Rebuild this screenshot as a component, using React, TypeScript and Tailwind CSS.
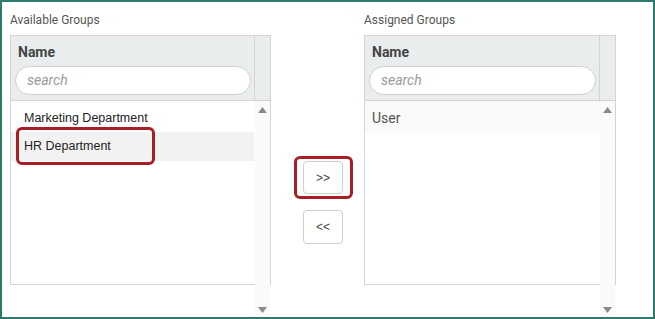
import React from 'react';

const Arrow = ({ up }: { up?: boolean }) => (
  <svg width="9" height="6" viewBox="0 0 9 6" className="block">
    {up ? <polygon points="4.5,0 9,6 0,6" fill="#8a8a8a" /> : <polygon points="0,0 9,0 4.5,6" fill="#8a8a8a" />}
  </svg>
);

// One list box: title, header with search, body with fake scrollbar
function GroupList({ title, children, wide }: { title: string; children?: React.ReactNode; wide?: boolean }) {
  return (
    <div className={wide ? 'w-[252px]' : 'w-[261px]'}>
      <div className="h-4 text-[12px] leading-4 text-[#555] mb-[7px] font-['Roboto',sans-serif]">{title}</div>
      <div className="relative border border-[#d4d4d4] bg-white">
        <div className="flex h-[64px] bg-[#eaeded] border-b border-[#d4d4d4] box-content">
          <div className="flex-1 pl-[4px] pr-[3px]">
            <div className="pt-[8px] pl-[3px] h-[30px] text-[14px] leading-[16px] font-bold text-[#444] font-['Roboto',sans-serif]">Name</div>
            <div className="h-[29px] rounded-full border border-[#d0d0d0] bg-white pl-[11px] flex items-center text-[14px] italic text-[#9a9a9a] font-['Roboto',sans-serif]">
              search
            </div>
          </div>
          <div className="w-[16px] border-l border-[#d4d4d4]" />
        </div>
        <div className="relative h-[183px]">
          {children}
          <div className="absolute right-0 top-0 w-[15px] h-[216px] bg-[#fafafa] flex flex-col items-center justify-between pt-[6px] pb-[4px]">
            <Arrow up />
            <Arrow />
          </div>
        </div>
      </div>
    </div>
  );
}

export default function App() {
  return (
    <div className="w-[655px] h-[319px] border-2 border-[#2e7a6c] bg-white pt-[10px] pl-[8px] flex overflow-hidden">
      <GroupList title="Available Groups">
        <div className="h-[31px] pt-[4px] flex items-center pl-[13px] text-[12.5px] text-[#222] font-['Liberation_Sans',Arial,sans-serif]">
          Marketing Department
        </div>
        <div className="h-[29px] mr-[16px] bg-[#f2f2f2] flex items-center pl-[13px] text-[12.5px] text-[#222] font-['Liberation_Sans',Arial,sans-serif]">
          HR Department
        </div>
        <div className="absolute left-[5px] top-[26px] w-[139px] h-[38px] border-[3px] border-[#a81e25] rounded-[6px]" />
      </GroupList>

      <div className="w-[93px] pt-[144px] pl-[23px] flex flex-col items-start">
        <div className="pl-[6px] pr-[7px] py-[2px] border-[3px] border-[#a81e25] rounded-[6px] mb-[11px]">
          <button className="w-[40px] h-[33px] border border-[#cfcfcf] rounded-[4px] bg-white text-[12px] text-[#444] font-['Liberation_Sans',Arial,sans-serif]">
            &gt;&gt;
          </button>
        </div>
        <button className="ml-[9px] w-[40px] h-[34px] border border-[#cfcfcf] rounded-[4px] bg-white text-[12px] text-[#444] font-['Liberation_Sans',Arial,sans-serif]">
          &lt;&lt;
        </button>
      </div>

      <GroupList title="Assigned Groups" wide>
        <div className="h-[31px] pt-[3px] mr-[15px] bg-[#fafafa] flex items-center pl-[7px] text-[14px] text-[#555] font-['Roboto',sans-serif]">
          User
        </div>
      </GroupList>
    </div>
  );
}
